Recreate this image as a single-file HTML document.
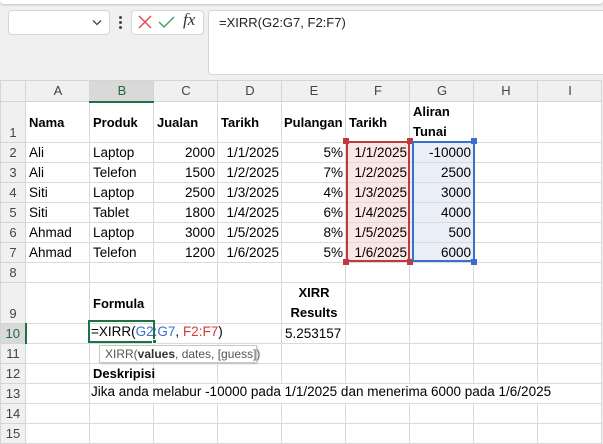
<!DOCTYPE html>
<html><head><meta charset="utf-8"><style>
*{margin:0;padding:0;box-sizing:border-box}
body{width:603px;height:440px;overflow:hidden;background:#f0f0f0;font-family:"Liberation Sans",Arial,sans-serif;position:relative}
.ab{position:absolute}
table{position:absolute;left:0;top:80px;width:601px;border-collapse:collapse;table-layout:fixed;background:#fff}
td{border:1px solid #dadada;font-size:13.5px;color:#000;white-space:nowrap;overflow:hidden;vertical-align:bottom;padding:0 2px 1px 3px;line-height:17px}
td.h{background:#f0f0f0;color:#444;text-align:center;vertical-align:middle;font-size:13px;border-color:#d5d5d5}
td.rh{background:#f0f0f0;color:#444;text-align:center;font-size:13px;padding:0 0 1px 0;border-color:#d5d5d5}
.r{text-align:right}
.b{font-weight:bold;font-size:13px}
.t{position:absolute;font-size:13.5px;white-space:nowrap;line-height:17px}
</style></head><body>
<div class="ab" style="left:0;top:0;width:603px;height:4px;background:#fff;box-shadow:0 1px 2px rgba(0,0,0,.2);border-radius:0 0 4px 4px"></div>
<div class="ab" style="left:8px;top:10px;width:102px;height:25px;background:#fff;border:1px solid #d6d6d6;border-radius:4px"></div>
<svg class="ab" style="left:92px;top:19px" width="10" height="7"><path d="M1 1.5L5 5.5L9 1.5" stroke="#444" fill="none" stroke-width="1.3"/></svg>
<div class="ab" style="left:119px;top:16px;width:3px;height:3px;background:#444;border-radius:50%;box-shadow:0 5px 0 #444,0 10px 0 #444"></div>
<div class="ab" style="left:131px;top:10px;width:73px;height:25px;background:#fff;border:1px solid #d6d6d6;border-radius:4px"></div>
<svg class="ab" style="left:138px;top:15px" width="14" height="14"><path d="M1 1L13 13M13 1L1 13" stroke="#e04848" stroke-width="1.4"/></svg>
<svg class="ab" style="left:158px;top:15px" width="17" height="14"><path d="M1 7L6 12L16 2" stroke="#3aa05a" fill="none" stroke-width="1.4"/></svg>
<div class="ab" style="left:183px;top:10px;font-family:'Liberation Serif',serif;font-style:italic;font-size:17px;color:#333">fx</div>
<div class="ab" style="left:208px;top:10px;width:400px;height:65px;background:#fff;border:1px solid #d6d6d6;border-radius:4px"></div>
<div class="ab" style="left:219px;top:15px;font-size:13px;color:#222">=XIRR(G2:G7, F2:F7)</div>
<table>
<colgroup><col style="width:25px"><col style="width:64px"><col style="width:64px"><col style="width:64px"><col style="width:64px"><col style="width:64px"><col style="width:64px"><col style="width:64px"><col style="width:64px"><col style="width:64px"></colgroup>
<tr style="height:21px"><td class="h"></td><td class="h">A</td><td class="h" style="background:#d9d9d9;color:#1e6b41;border-bottom:2px solid #1e7145">B</td><td class="h">C</td><td class="h">D</td><td class="h">E</td><td class="h">F</td><td class="h">G</td><td class="h">H</td><td class="h">I</td></tr>
<tr style="height:40px"><td class="rh">1</td><td class="b" style="padding-bottom:11px">Nama</td><td class="b" style="padding-bottom:11px">Produk</td><td class="b" style="padding-bottom:11px">Jualan</td><td class="b" style="padding-bottom:11px">Tarikh</td><td class="b" style="padding-bottom:11px;padding-left:2px">Pulangan</td><td class="b" style="padding-bottom:11px">Tarikh</td><td class="b" style="white-space:normal;line-height:20px;padding-bottom:0">Aliran Tunai</td><td></td><td></td></tr>
<tr style="height:20px"><td class="rh">2</td><td>Ali</td><td>Laptop</td><td class="r">2000</td><td class="r">1/1/2025</td><td class="r">5%</td><td class="r" style="background:#fbe6e6">1/1/2025</td><td class="r" style="background:#e9eef7">-10000</td><td></td><td></td></tr>
<tr style="height:20px"><td class="rh">3</td><td>Ali</td><td>Telefon</td><td class="r">1500</td><td class="r">1/2/2025</td><td class="r">7%</td><td class="r" style="background:#fbe6e6">1/2/2025</td><td class="r" style="background:#e9eef7">2500</td><td></td><td></td></tr>
<tr style="height:20px"><td class="rh">4</td><td>Siti</td><td>Laptop</td><td class="r">2500</td><td class="r">1/3/2025</td><td class="r">4%</td><td class="r" style="background:#fbe6e6">1/3/2025</td><td class="r" style="background:#e9eef7">3000</td><td></td><td></td></tr>
<tr style="height:20px"><td class="rh">5</td><td>Siti</td><td>Tablet</td><td class="r">1800</td><td class="r">1/4/2025</td><td class="r">6%</td><td class="r" style="background:#fbe6e6">1/4/2025</td><td class="r" style="background:#e9eef7">4000</td><td></td><td></td></tr>
<tr style="height:20px"><td class="rh">6</td><td>Ahmad</td><td>Laptop</td><td class="r">3000</td><td class="r">1/5/2025</td><td class="r">8%</td><td class="r" style="background:#fbe6e6">1/5/2025</td><td class="r" style="background:#e9eef7">500</td><td></td><td></td></tr>
<tr style="height:20px"><td class="rh">7</td><td>Ahmad</td><td>Telefon</td><td class="r">1200</td><td class="r">1/6/2025</td><td class="r">5%</td><td class="r" style="background:#fbe6e6">1/6/2025</td><td class="r" style="background:#e9eef7">6000</td><td></td><td></td></tr>
<tr style="height:20px"><td class="rh">8</td><td></td><td></td><td></td><td></td><td></td><td></td><td></td><td></td><td></td></tr>
<tr style="height:40px"><td class="rh">9</td><td></td><td class="b" style="padding-bottom:11px">Formula</td><td></td><td></td><td class="b" style="white-space:normal;text-align:center;line-height:20px;padding-bottom:0">XIRR Results</td><td></td><td></td><td></td><td></td></tr>
<tr style="height:20px"><td class="rh" style="background:#d9d9d9;color:#1e6b41;border-right:2px solid #1e7145">10</td><td></td><td style="border-right-color:transparent"></td><td style="border-right-color:transparent"></td><td></td><td style="text-align:right;padding-right:8px">5.253157</td><td></td><td></td><td></td><td></td></tr>
<tr style="height:20px"><td class="rh">11</td><td></td><td></td><td></td><td></td><td></td><td></td><td></td><td></td><td></td></tr>
<tr style="height:20px"><td class="rh">12</td><td></td><td class="b" style="overflow:visible">Deskripisi</td><td></td><td></td><td></td><td></td><td></td><td></td><td></td></tr>
<tr style="height:20px"><td class="rh">13</td><td></td><td style="border-right-color:#fff"></td><td style="border-right-color:#fff"></td><td style="border-right-color:#fff"></td><td style="border-right-color:#fff"></td><td style="border-right-color:#fff"></td><td style="border-right-color:#fff"></td><td style="border-right-color:#fff"></td><td></td></tr>
<tr style="height:20px"><td class="rh">14</td><td></td><td></td><td></td><td></td><td></td><td></td><td></td><td></td><td></td></tr>
<tr style="height:20px"><td class="rh">15</td><td></td><td></td><td></td><td></td><td></td><td></td><td></td><td></td><td></td></tr>
</table>
<div class="t" style="left:91px;top:323px">=XIRR(<span style="color:#3a6fd0">G2:G7</span>, <span style="color:#d23a3a">F2:F7</span>)</div>
<div class="t" style="left:91px;top:383px">Jika anda melabur -10000 pada 1/1/2025 dan menerima 6000 pada 1/6/2025</div>
<div class="ab" style="left:346px;top:141px;width:64px;height:121px;border:2px solid #c0393f"></div>
<div class="ab" style="left:343px;top:138px;width:6px;height:6px;background:#c0393f"></div>
<div class="ab" style="left:407px;top:138px;width:6px;height:6px;background:#c0393f"></div>
<div class="ab" style="left:343px;top:259px;width:6px;height:6px;background:#c0393f"></div>
<div class="ab" style="left:407px;top:259px;width:6px;height:6px;background:#c0393f"></div>
<div class="ab" style="left:412px;top:141px;width:63px;height:121px;border:2px solid #3a6fd0"></div>
<div class="ab" style="left:471px;top:138px;width:6px;height:6px;background:#3a6fd0"></div>
<div class="ab" style="left:471px;top:259px;width:6px;height:6px;background:#3a6fd0"></div>
<div class="ab" style="left:88px;top:320px;width:67px;height:23px;border:2px solid #1e7145"></div>
<div class="ab" style="left:152px;top:339px;width:5px;height:5px;background:#1e7145;border:1px solid #fff"></div>
<div class="ab" style="left:99px;top:345px;width:158px;height:18px;background:#fff;border:1px solid #c8c8c8;box-shadow:1px 1px 2px rgba(0,0,0,.15);font-size:12px;color:#555;padding:1px 5px;white-space:nowrap">XIRR(<b style="color:#333">values</b>, dates, [guess])</div>
</body></html>
